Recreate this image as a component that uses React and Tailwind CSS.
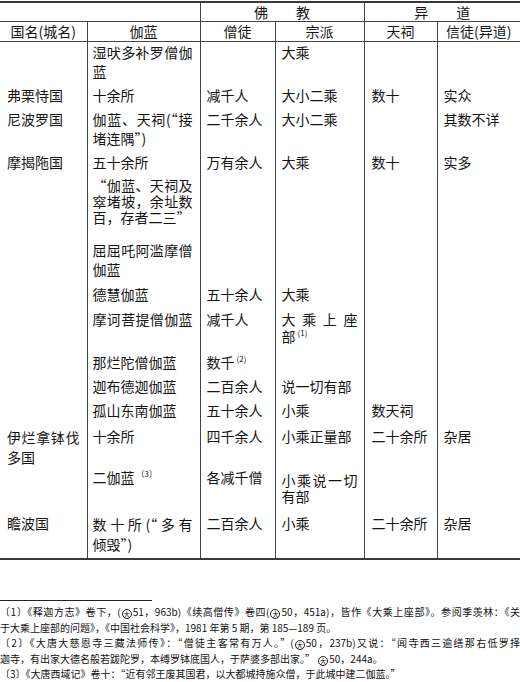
import React from 'react';

// justified single line (the scan spreads full lines across the cell)
function J({ children }) {
    return <div className="text-justify [text-align-last:justify]">{children}</div>;
}

function Sup({ children }) {
    return <span className="relative -top-[6px] ml-[2px] text-[8px] leading-none">{children}</span>;
}

// circled 大 — Taishō canon mark
function Tai() {
    return (
        <span className="mx-[1px] inline-flex h-[10px] w-[10px] items-center justify-center rounded-full border border-[#222] align-[-1px] text-[6.5px] leading-none">
            大
        </span>
    );
}

function Note({ full, children }) {
    return (
        <div className={`h-[15.5px] overflow-visible leading-[15.5px] ${full ? 'text-justify [text-align-last:justify]' : ''}`}>
            {children}
        </div>
    );
}

const pads = [
    'pl-[7px] pr-[7px]',
    'pl-[5px] pr-[7px]',
    'pl-[6px] pr-[4px]',
    'pl-[6px] pr-[6px]',
    'pl-[7px] pr-[4px]',
    'pl-[6px] pr-[4px]',
];

const base = 'leading-[19px] pt-[1px]';

const rows = [
    { h: 'h-[43px]', c: ['', <><J>湿吠多补罗僧伽</J><div>蓝</div></>, '', '大乘', '', ''] },
    { h: 'h-[24px]', c: ['弗栗恃国', '十余所', '减千人', '大小二乘', '数十', '实众'] },
    { h: 'h-[43px]', c: ['尼波罗国', <><J>伽蓝、天祠(“接</J><div>堵连隅”)</div></>, '二千余人', '大小二乘', '', '其数不详'] },
    { h: 'h-[23px]', c: ['摩揭陁国', '五十余所', '万有余人', '大乘', '数十', '实多'] },
    {
        h: 'h-[65px]',
        c: ['', <div className="-mt-[1px] leading-[16px] pt-[2px]"><J>“伽蓝、天祠及</J><J>窣堵坡，余址数</J><div>百，存者二三”</div></div>, '', '', '', ''],
    },
    { h: 'h-[44px]', c: ['', <><J>屈屈吒阿滥摩僧</J><div>伽蓝</div></>, '', '', '', ''] },
    { h: 'h-[25px]', c: ['', '德慧伽蓝', '五十余人', '大乘', '', ''] },
    {
        h: 'h-[43px]',
        c: ['', <J>摩诃菩提僧伽蓝</J>, '减千人', <div className="leading-[17px] pt-[1px]"><J>大乘上座</J><div>部<Sup>(1)</Sup></div></div>, '', ''],
    },
    { h: 'h-[24px]', c: ['', '那烂陀僧伽蓝', <>数千<Sup>(2)</Sup></>, '', '', ''] },
    { h: 'h-[24px]', c: ['', '迦布德迦伽蓝', '二百余人', '说一切有部', '', ''] },
    { h: 'h-[26px]', c: ['', '孤山东南伽蓝', '五十余人', '小乘', '数天祠', ''] },
    {
        h: 'h-[40px]',
        c: [<div className="leading-[20px]"><J>伊烂拿钵伐</J><div>多国</div></div>, '十余所', '四千余人', '小乘正量部', '二十余所', '杂居'],
    },
    {
        h: 'h-[46px]',
        c: ['', <>二伽蓝<Sup>〔3〕</Sup></>, '各减千僧', <div className="leading-[16px] pt-[4px]"><J>小乘说一切</J><div>有部</div></div>, '', ''],
    },
    {
        h: 'h-[46px]',
        c: ['瞻波国', <div className="leading-[20px]"><J>数十所(“多有</J><div>倾毁”)</div></div>, '二百余人', '小乘', '二十余所', '杂居'],
    },
];

export default function App() {
    return (
        <div className="min-h-screen w-[520px] bg-white font-['Noto_Sans_CJK_SC','Liberation_Serif',sans-serif] text-[#151515]">
            <div className="h-[559px] pt-[1px]">
                <table className="w-[520px] table-fixed border-collapse border-t-2 border-b-2 border-[#3a3a3a] text-[14px]">
                    <colgroup>
                        <col className="w-[87px]" />
                        <col className="w-[113px]" />
                        <col className="w-[75px]" />
                        <col className="w-[89px]" />
                        <col className="w-[73px]" />
                        <col className="w-[83px]" />
                    </colgroup>
                    <thead>
                        <tr className="h-[19px] border-b border-[#444]">
                            <th colSpan={2} className="font-normal"></th>
                            <th colSpan={2} className="border-l border-[#444] font-normal leading-[18px]">佛　　教</th>
                            <th colSpan={2} className="border-l border-[#444] font-normal leading-[18px]">异　　道</th>
                        </tr>
                        <tr className="h-[20px] border-b border-[#444]">
                            <th className="font-normal leading-[19px]">国名(城名)</th>
                            <th className="border-l border-[#444] font-normal leading-[19px]">伽蓝</th>
                            <th className="border-l border-[#444] font-normal leading-[19px]">僧徒</th>
                            <th className="border-l border-[#444] font-normal leading-[19px]">宗派</th>
                            <th className="border-l border-[#444] font-normal leading-[19px]">天祠</th>
                            <th className="border-l border-[#444] font-normal leading-[19px]">信徒(异道)</th>
                        </tr>
                    </thead>
                    <tbody>
                        {rows.map((row, r) => (
                            <tr key={r} className={row.h}>
                                {row.c.map((cell, i) => (
                                    <td
                                        key={i}
                                        className={`p-0 align-top ${pads[i]} ${i > 0 ? 'border-l border-[#444]' : ''}`}
                                    >
                                        <div className={base}>{cell}</div>
                                    </td>
                                ))}
                            </tr>
                        ))}
                    </tbody>
                </table>
            </div>

            <div className="mt-[41px] w-[152px] border-t border-[#222]" />

            <div className="mt-[3px] text-[10px] text-[#111]">
                <Note full>〔1〕《释迦方志》卷下，(<Tai />51，963b)《续高僧传》卷四(<Tai />50，451a)，皆作《大乘上座部》。参阅季羡林：《关</Note>
                <Note>于大乘上座部的问题》，《中国社会科学》，1981 年第 5 期，第 185—189 页。</Note>
                <Note full>〔2〕《大唐大慈恩寺三藏法师传》：“僧徒主客常有万人。”(<Tai />50，237b)又说：“闻寺西三逾缮那右低罗择</Note>
                <Note>迦寺，有出家大德名般若跋陀罗，本缚罗钵底国人，于萨婆多部出家。” <Tai />50，244a。</Note>
                <Note>〔3〕《大唐西域记》卷十：“近有邻王废其国君，以大都城持施众僧，于此城中建二伽蓝。”</Note>
            </div>
        </div>
    );
}
